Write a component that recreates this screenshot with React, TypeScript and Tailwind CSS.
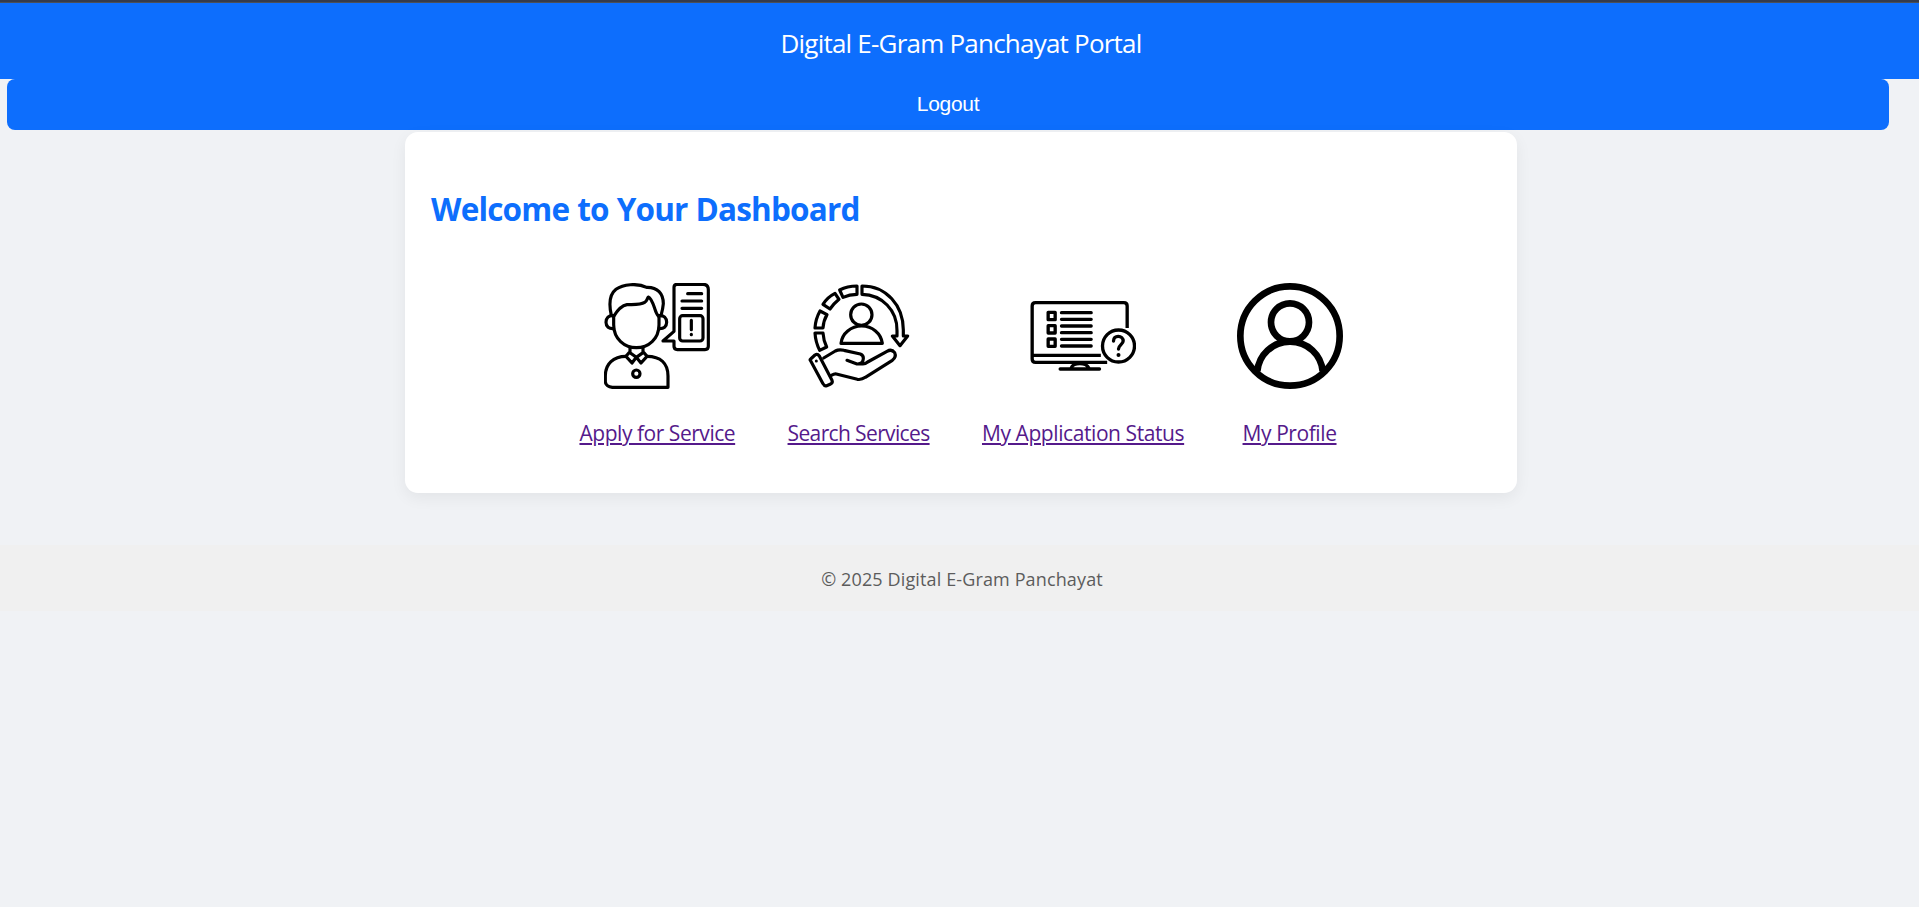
import type { ReactNode } from "react";

const iconClass = "block h-[106px] w-[106px]";

function ApplyIcon() {
  return (
    <svg className={iconClass} viewBox="42 39 318 318" fill="none" stroke="#000" strokeWidth="9.5" strokeLinecap="round" strokeLinejoin="round" aria-hidden="true">
      <path d="M64 136C56 101 59 73 78 58C99 43 141 38 170 52C203 51 220 71 220 101C219 115 216 126 213 137" />
      <path d="M71 139C82 121 94 107 111 104C130 103 151 105 164 97C171 93 171 86 175 81C181 83 190 103 194 115C197 125 201 134 206 139" />
      <path d="M71 139V164C71 207 104 233 139 233C175 233 207 207 207 164V139" />
      <path d="M71 137C56 135 48 144 48 157C48 170 57 177 71 176M207 137C222 135 230 144 230 157C230 170 221 177 207 176" />
      <path d="M120 233V248L139 262L159 248V233M117 248L108 259L126 279L139 262L153 279L171 259L162 248" />
      <path d="M108 259C70 259 46 282 46 318V335Q47 350 67 352H234V318C234 280 211 259 171 259" />
      <circle cx="139" cy="311" r="11" />
      <path d="M252 184V52Q252 43 262 43H339Q355 43 355 59V229Q355 239 345 239H262Q252 239 252 229V213L219 213Z" />
      <path d="M293 71H335M276 93H335M276 115H335" />
      <rect x="269" y="137" width="70" height="76" rx="9" />
      <path d="M304 151V179M304 193V194" />
    </svg>
  );
}

function SearchIcon() {
  return (
    <svg className={iconClass} viewBox="33 39 318 318" fill="none" stroke="#000" strokeWidth="9.5" strokeLinejoin="round" strokeLinecap="round" aria-hidden="true">
      <path d="M201 48V73C261 74 307 121 306 182V198H292L315 227L338 198H325V180C325 106 274 48 201 48Z" />
      <path d="M186 48C168 48 151 51 134 60L144 82C157 76 171 73 186 73Z" />
      <path d="M120 70C106 77 93 88 84 103L105 117C113 106 121 97 132 88Z" />
      <path d="M75 123C66 139 61 156 60 174H84C85 159 89 146 96 134Z" />
      <path d="M60 189C61 207 66 225 74 241L95 231C88 217 85 204 84 189Z" />
      <circle cx="199" cy="134" r="32" />
      <path d="M138 220H262C258 190 232 168 200 168C168 168 141 190 138 220Z" />
      <path d="M47 267L60 255Q67 250 73 258L111 331Q114 338 107 342L95 347Q88 349 84 341L46 271Q44 269 47 267Z" />
      <path d="M86 264L121 243Q132 237 147 241L196 252Q206 256 205 266Q204 283 186 282L156 271M186 282H204Q211 282 218 276L276 244Q290 236 299 248Q305 261 292 271L211 322Q200 330 187 328L124 312Q118 311 109 316" />
      <circle cx="64" cy="273" r="4.5" fill="#000" stroke="none" />
    </svg>
  );
}

function StatusIcon() {
  return (
    <svg className={iconClass} viewBox="31.5 39 318 318" fill="none" stroke="#000" strokeWidth="10" strokeLinejoin="round" aria-hidden="true">
      <path d="M323 174V108Q323 98 313 98H48Q38 98 38 108V267Q38 277 48 277H263M38 256H244" />
      <path d="M122 297H240M155 294C158 286 167 281 181 281C195 281 204 286 208 294" strokeLinecap="round" />
      <path d="M86 127H107V149H86ZM86 167H107V189H86ZM86 207H107V229H86Z" />
      <path d="M126 128H215M126 148H215M126 168H215M126 188H215M126 208H215M126 228H215" strokeLinecap="round" />
      <circle cx="297" cy="228" r="48" />
      <path d="M282 213C282 204 288 199 296 199C305 199 311 205 311 213C311 223 297 225 297 237" strokeLinecap="round" />
      <circle cx="297" cy="255" r="6" fill="#000" stroke="none" />
    </svg>
  );
}

function ProfileIcon() {
  return (
    <svg className={iconClass} viewBox="36 39 318 318" fill="none" stroke="#000" strokeWidth="20" aria-hidden="true">
      <circle cx="195" cy="198" r="149" />
      <circle cx="195" cy="157" r="57" />
      <path d="M97 304C101 255 142 215 195 215C248 215 289 255 293 304" />
    </svg>
  );
}

function ServiceLink({ icon, children }: { icon: ReactNode; children: ReactNode }) {
  return (
    <div className="flex flex-col items-center">
      {icon}
      <a href="#" className="mt-[29px] whitespace-nowrap text-[21px] leading-[30px] text-[#551a8b] underline decoration-2 underline-offset-2">
        {children}
      </a>
    </div>
  );
}

export default function App() {
  return (
    <div className="min-h-screen bg-[#f0f2f5] font-['Open_Sans',sans-serif]">
      <div className="h-[3px] border-b border-[#4b4f57] bg-[#353b4b]" />
      <header className="flex h-[76px] items-center justify-center bg-[#0d6efd] pl-[3px] pt-[4px] text-[26px] text-white">
        <span className="tracking-[-0.78px]">Digital E-Gram Panchayat Portal</span>
      </header>
      <button className="ml-[7px] flex h-[51px] w-[1882px] items-center justify-center rounded-lg bg-[#0d6efd] pb-[2px] font-['Liberation_Sans',sans-serif] text-[21px] tracking-[-0.3px] text-white">
        Logout
      </button>
      <main className="ml-[405px] mt-[2px] h-[361px] w-[1112px] rounded-[13px] bg-white px-[26px] pt-[55px] shadow-[0_5px_16px_rgba(0,0,0,0.06)]">
        <h2 className="text-[31.5px] font-bold leading-[44px] tracking-[-0.82px] text-[#0d6efd] [word-spacing:0.6px]">Welcome to Your Dashboard</h2>
        <div className="mt-[52px] flex justify-center gap-[52.4px]">
          <ServiceLink icon={<ApplyIcon />}><span className="tracking-[-0.46px]">Apply for Service</span></ServiceLink>
          <ServiceLink icon={<SearchIcon />}><span className="tracking-[-0.63px]">Search Services</span></ServiceLink>
          <ServiceLink icon={<StatusIcon />}><span className="tracking-[-0.42px]">My Application Status</span></ServiceLink>
          <ServiceLink icon={<ProfileIcon />}><span className="tracking-[-0.42px]">My Profile</span></ServiceLink>
        </div>
      </main>
      <footer className="mt-[52px] flex h-[66px] items-center justify-center bg-[#f0f0f0] pl-[5px] pt-[2px] text-[18px] text-[#5c5c5c]">
        <span className="tracking-[0.13px]">© 2025 Digital E-Gram Panchayat</span>
      </footer>
    </div>
  );
}
